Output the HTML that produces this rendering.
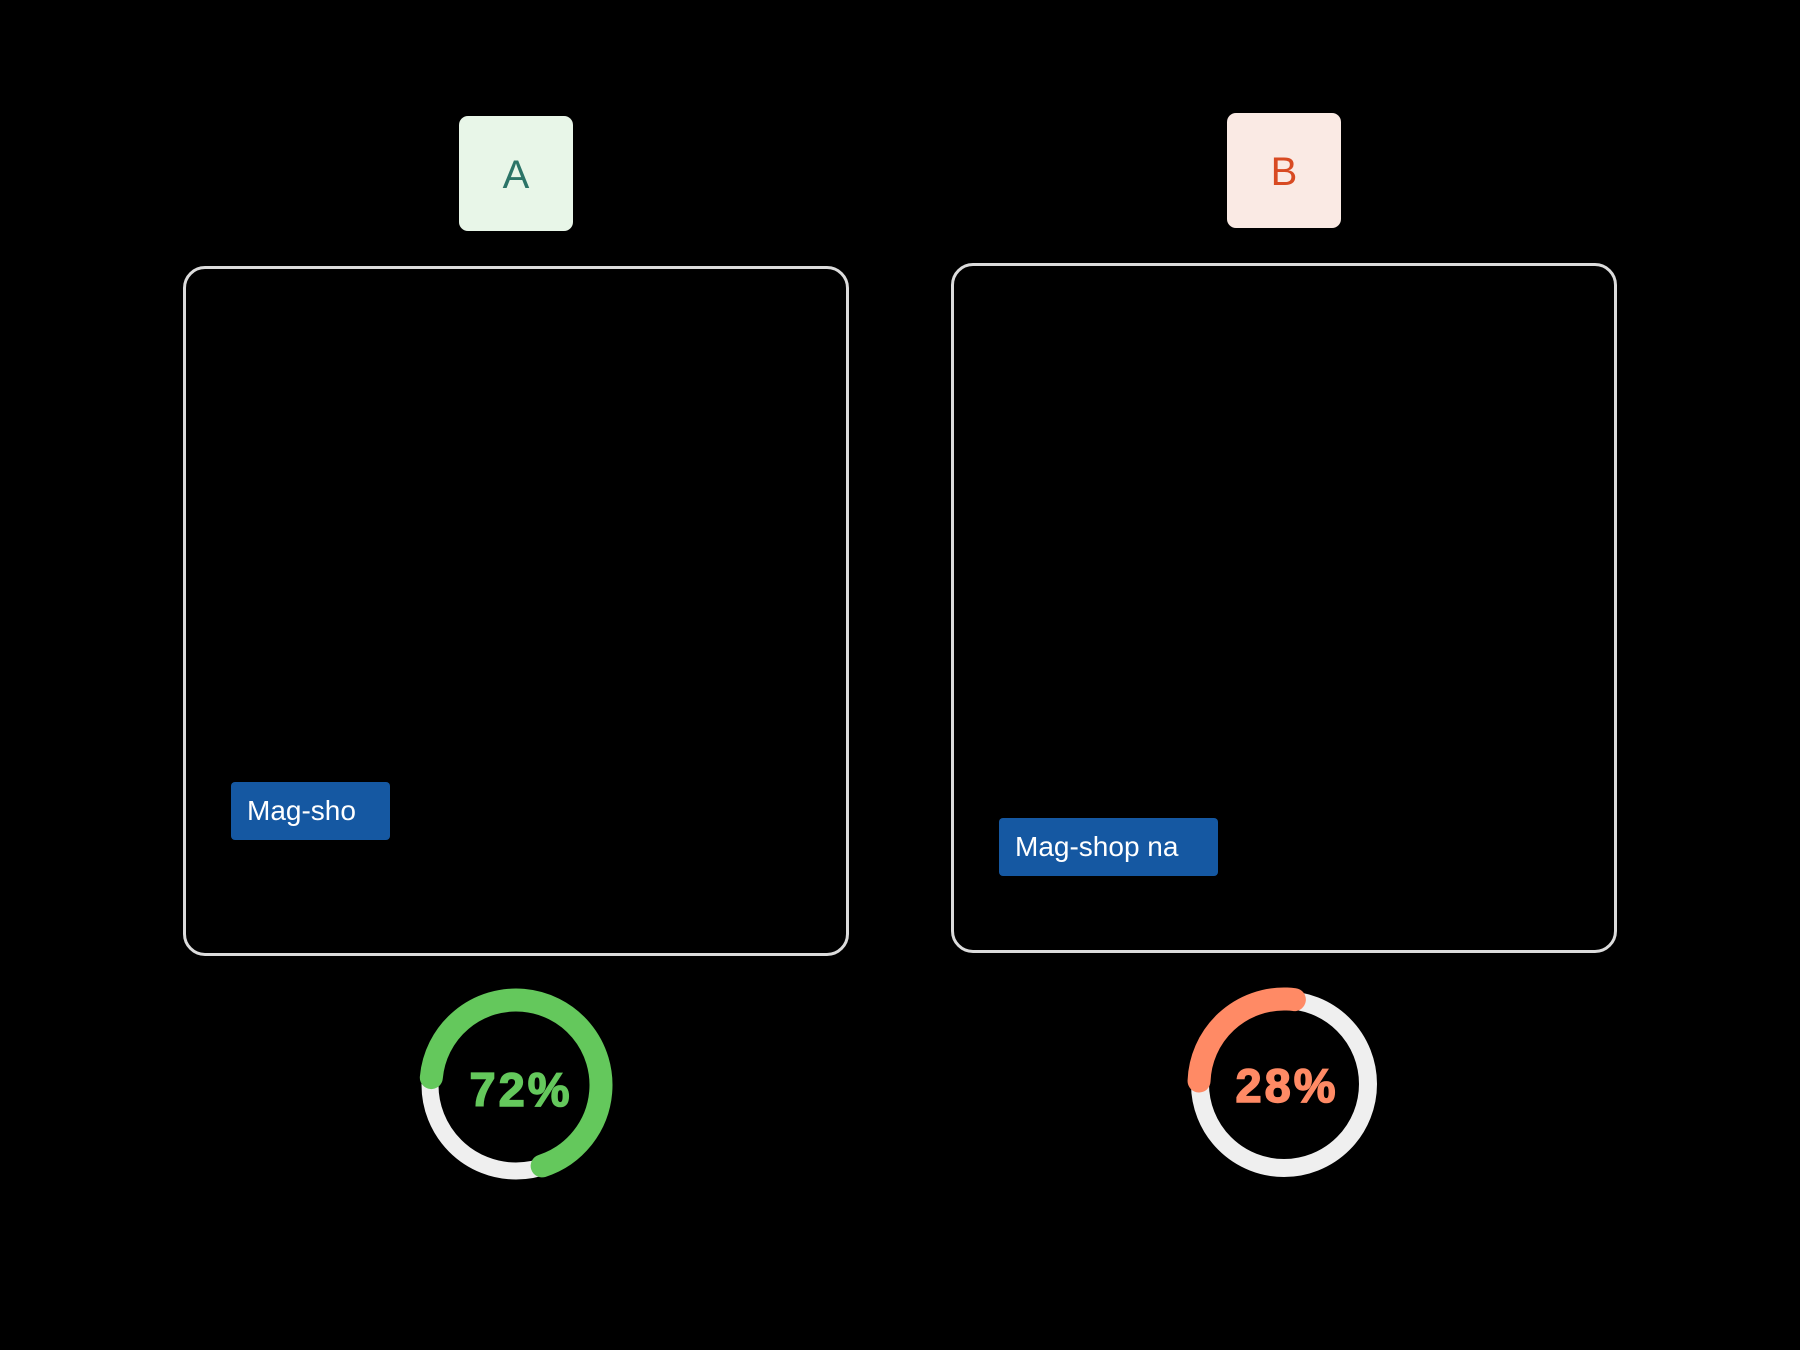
<!DOCTYPE html>
<html><head><meta charset="utf-8"><style>
html,body{margin:0;padding:0;background:#000;width:1800px;height:1350px;overflow:hidden;font-family:"Liberation Sans",sans-serif}
.lbl{position:absolute;width:114px;height:115px;border-radius:9px;display:flex;align-items:center;justify-content:center;font-size:40px}
.box{position:absolute;border:3px solid #dcdcdc;border-radius:22px;box-sizing:border-box}
.tag{position:absolute;background:#1558a2;color:#fff;border-radius:4px;font-size:28px;display:flex;align-items:center;padding-left:16px;box-sizing:border-box}
svg{position:absolute;left:0;top:0}
</style></head><body>
<div class="lbl" style="left:459px;top:116px;background:#e8f6e8;color:#2b7467;padding-top:4px;box-sizing:border-box">A</div>
<div class="lbl" style="left:1227px;top:113px;background:#faeae4;color:#d84a22;padding-top:4px;box-sizing:border-box">B</div>
<div class="box" style="left:183px;top:266px;width:666px;height:690px"></div>
<div class="box" style="left:951px;top:263px;width:666px;height:690px"></div>
<div class="tag" style="left:231px;top:782px;width:159px;height:58px">Mag-sho</div>
<div class="tag" style="left:999px;top:818px;width:219px;height:58px">Mag-shop na</div>
<svg width="1800" height="1350">
<circle cx="516" cy="1085" r="86" fill="none" stroke="#efefef" stroke-width="17"/>
<circle cx="516" cy="1085" r="85" fill="none" stroke="#64c85c" stroke-width="23" stroke-linecap="round" stroke-dasharray="366.4 1000" transform="rotate(185 516 1085)"/>
<text x="521" y="1106" text-anchor="middle" font-family="Liberation Sans" font-weight="bold" font-size="47" fill="#64c85c" stroke="#64c85c" stroke-width="1.5" letter-spacing="3">72%</text>
<circle cx="1284" cy="1084" r="84" fill="none" stroke="#efefef" stroke-width="18"/>
<circle cx="1284" cy="1084" r="85" fill="none" stroke="#ff8a65" stroke-width="23" stroke-linecap="round" stroke-dasharray="140.9 1000" transform="rotate(182 1284 1084)"/>
<text x="1287" y="1102" text-anchor="middle" font-family="Liberation Sans" font-weight="bold" font-size="47" fill="#ff8a65" stroke="#ff8a65" stroke-width="1.5" letter-spacing="3">28%</text>
</svg>
</body></html>
